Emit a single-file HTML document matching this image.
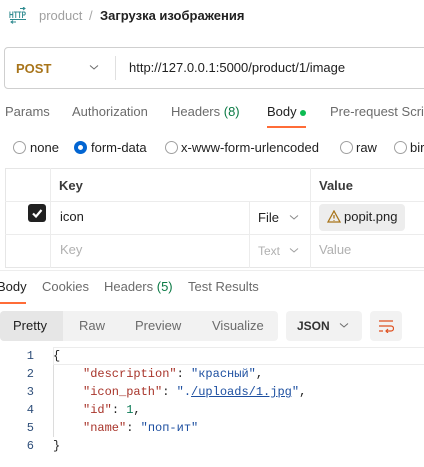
<!DOCTYPE html><html><head><meta charset="utf-8"><style>
*{margin:0;padding:0;box-sizing:border-box}
body{width:424px;height:467px;overflow:hidden;background:#fff;font-family:"Liberation Sans","Noto Sans CJK SC",sans-serif;font-size:13px;color:#212121;position:relative}
.a{position:absolute;white-space:nowrap}
.g{color:#6b6b6b}
.l{color:#a6a6a6}
.m{font-family:"Liberation Mono",monospace;font-size:12px}
.rad{position:absolute;width:13px;height:13px;border:1px solid #a0a0a0;border-radius:50%}
.ln{position:absolute;left:0;width:34px;text-align:right;color:#2f4f7a}
.k{color:#a8342a}.s{color:#1d4fa0}.n{color:#0b7a55}
</style></head><body>
<svg class="a" style="left:9px;top:7px" width="18" height="17"><path d="M11 1.5H16M14 0L16 1.5L14 3" stroke="#2e8a8f" fill="none"/><text x="0" y="11" font-size="9" font-weight="bold" fill="#2e8a8f" font-family="Liberation Sans" textLength="17" lengthAdjust="spacingAndGlyphs">HTTP</text><path d="M1 12.5H17M2 15H7M4 13.5L2 15L4 16.5" stroke="#2e8a8f" fill="none"/></svg>
<div class="a l" style="left:39px;top:8px;color:#a0a0a0">product</div>
<div class="a l" style="left:89px;top:8px">/</div>
<div class="a" style="left:100px;top:8px;font-weight:bold">Загрузка изображения</div>

<div class="a" style="left:4px;top:47px;width:440px;height:42px;border:1px solid #cfcfcf;border-radius:4px"></div>
<div class="a" style="left:16px;top:61px;color:#a8741a;font-weight:bold">POST</div>
<svg class="a" style="left:89px;top:64px" width="10" height="7"><path d="M1 1.5L5 5L9 1.5" stroke="#6b6b6b" fill="none"/></svg>
<div class="a" style="left:115px;top:56px;width:1px;height:24px;background:#e0e0e0"></div>
<div class="a" style="left:129px;top:60px">http://127.0.0.1:5000/product/1/image</div>

<div class="a g" style="left:5px;top:104px">Params</div>
<div class="a g" style="left:72px;top:104px">Authorization</div>
<div class="a g" style="left:171px;top:104px">Headers <span style="color:#0b7a45">(8)</span></div>
<div class="a" style="left:267px;top:104px">Body</div>
<div class="a" style="left:300px;top:110px;width:6px;height:6px;border-radius:50%;background:#0cbb52"></div>
<div class="a g" style="left:330px;top:104px">Pre-request Scri</div>
<div class="a" style="left:267px;top:126px;width:39px;height:2px;background:#ff6c37"></div>

<div class="rad" style="left:13px;top:141px"></div><div class="a" style="left:30px;top:140px">none</div>
<div class="rad" style="left:74px;top:141px;border:4px solid #0265d2"></div><div class="a" style="left:91px;top:140px">form-data</div>
<div class="rad" style="left:165px;top:141px"></div><div class="a" style="left:181px;top:140px">x-www-form-urlencoded</div>
<div class="rad" style="left:340px;top:141px"></div><div class="a" style="left:356px;top:140px">raw</div>
<div class="rad" style="left:394px;top:141px"></div><div class="a" style="left:410px;top:140px">bir</div>

<div class="a" style="left:5px;top:168px;width:430px;height:100px;border:1px solid #e6e6e6"></div>
<div class="a" style="left:5px;top:201px;width:430px;height:1px;background:#ececec"></div>
<div class="a" style="left:5px;top:234px;width:430px;height:1px;background:#ececec"></div>
<div class="a" style="left:50px;top:168px;width:1px;height:100px;background:#ececec"></div>
<div class="a" style="left:249px;top:201px;width:1px;height:67px;background:#ececec"></div>
<div class="a" style="left:310px;top:168px;width:1px;height:100px;background:#ececec"></div>
<div class="a" style="left:59px;top:178px;font-weight:bold;color:#3a3a3a">Key</div>
<div class="a" style="left:319px;top:178px;font-weight:bold;color:#3a3a3a">Value</div>
<div class="a" style="left:28px;top:204px;width:18px;height:18px;background:#212121;border-radius:3px"></div>
<svg class="a" style="left:28px;top:204px" width="18" height="18"><path d="M5 9.5L8 12.5L13.5 6" stroke="#fff" stroke-width="2.2" fill="none"/></svg>
<div class="a" style="left:60px;top:209px">icon</div>
<div class="a" style="left:258px;top:210px">File</div>
<svg class="a" style="left:289px;top:214px" width="10" height="7"><path d="M1 1.5L5 5L9 1.5" stroke="#8a8a8a" fill="none"/></svg>
<div class="a" style="left:319px;top:204px;width:86px;height:27px;background:#ededed;border-radius:4px"></div>
<svg class="a" style="left:327px;top:210px" width="14" height="13"><path d="M7 1L13 12H1Z" stroke="#a8741a" stroke-width="1.3" fill="none"/><path d="M7 5V8.5M7 10V10.8" stroke="#a8741a" stroke-width="1.3"/></svg>
<div class="a" style="left:344px;top:209px">popit.png</div>
<div class="a l" style="left:60px;top:242px;color:#b0b0b0">Key</div>
<div class="a l" style="left:258px;top:244px;font-size:12px;color:#b0b0b0">Text</div>
<svg class="a" style="left:289px;top:247px" width="10" height="7"><path d="M1 1.5L5 5L9 1.5" stroke="#a0a0a0" fill="none"/></svg>
<div class="a l" style="left:319px;top:242px;color:#b0b0b0">Value</div>
<div class="a" style="left:0;top:270px;width:424px;height:1px;background:#ededed"></div>

<div class="a" style="left:-3px;top:279px">Body</div>
<div class="a g" style="left:42px;top:279px">Cookies</div>
<div class="a g" style="left:104px;top:279px">Headers <span style="color:#0b7a45">(5)</span></div>
<div class="a g" style="left:188px;top:279px">Test Results</div>
<div class="a" style="left:0;top:302px;width:26px;height:2px;background:#ff6c37"></div>

<div class="a" style="left:0;top:311px;width:278px;height:30px;background:#f2f2f2;border-radius:4px"></div>
<div class="a" style="left:0;top:311px;width:63px;height:30px;background:#e6e6e6;border-radius:4px 0 0 4px"></div>
<div class="a" style="left:13px;top:318px">Pretty</div>
<div class="a g" style="left:79px;top:318px">Raw</div>
<div class="a g" style="left:135px;top:318px">Preview</div>
<div class="a g" style="left:212px;top:318px">Visualize</div>
<div class="a" style="left:286px;top:311px;width:76px;height:30px;background:#f2f2f2;border-radius:4px"></div>
<div class="a" style="left:297px;top:319px;font-size:12px;font-weight:bold;color:#333">JSON</div>
<svg class="a" style="left:339px;top:322px" width="10" height="7"><path d="M1 1.5L5 5L9 1.5" stroke="#6b6b6b" fill="none"/></svg>
<div class="a" style="left:370px;top:311px;width:32px;height:30px;background:#f2f2f2;border-radius:4px"></div>
<svg class="a" style="left:378px;top:319px" width="16" height="14"><path d="M1 2H15M1 7H13A2.5 2.5 0 0 1 13 12H8M10 10L8 12L10 14M1 12H5" stroke="#e0501f" stroke-width="1.2" fill="none"/></svg>

<div class="a" style="left:53px;top:347px;width:380px;height:18px;border:1px solid #ececec;border-right:none"></div>
<div class="a" style="left:53px;top:365px;width:1px;height:72px;background:#dcdcdc"></div>
<div class="m">
<div class="ln a" style="top:349px">1</div><div class="ln a" style="top:367px">2</div><div class="ln a" style="top:385px">3</div><div class="ln a" style="top:403px">4</div><div class="ln a" style="top:421px">5</div><div class="ln a" style="top:439px">6</div>
<div class="a" style="left:53px;top:349px">{</div>
<div class="a" style="left:83px;top:367px"><span class="k">"description"</span>: <span class="s">"красный"</span>,</div>
<div class="a" style="left:83px;top:385px"><span class="k">"icon_path"</span>: <span class="s">".<u>/uploads/1.jpg</u>"</span>,</div>
<div class="a" style="left:83px;top:403px"><span class="k">"id"</span>: <span class="n">1</span>,</div>
<div class="a" style="left:83px;top:421px"><span class="k">"name"</span>: <span class="s">"поп-ит"</span></div>
<div class="a" style="left:53px;top:439px">}</div>
</div>
</body></html>
